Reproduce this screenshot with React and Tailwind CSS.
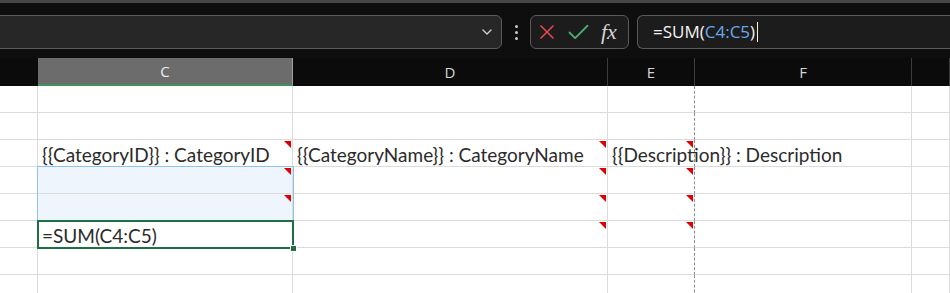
import React from 'react';
import { ChevronDown, X, Check } from 'lucide-react';

const cols = ['B', 'C', 'D', 'E', 'F', 'G'];

// red comment markers per row index (0-based) and column
const markers = {
    2: ['C', 'D', 'E'],
    3: ['C', 'D', 'E'],
    4: ['C', 'D', 'E'],
    5: ['D', 'E'],
};

const Marker = () => (
    <div className="absolute top-[1px] right-[1px] w-0 h-0 border-l-[7px] border-l-transparent border-t-[7px] border-t-[#e00000] z-20" />
);

const cellText = {
    '2C': '{{CategoryID}} : CategoryID',
    '2D': '{{CategoryName}} : CategoryName',
    '2E': '{{Description}} : Description',
    '5C': '=SUM(C4:C5)',
};

const App = () => {
    const rows = [0, 1, 2, 3, 4, 5, 6, 7];

    return (
        <div className="w-[950px] h-[293px] overflow-hidden bg-white">
            <div className="h-[3px] bg-[#474747]" />

            {/* formula bar */}
            <div className="h-[55px] bg-[#0e0e0e] pt-[12px] flex items-start font-['Open_Sans']">
                <div className="ml-[-12px] w-[514px] h-[34px] rounded-md border border-[#5a5a5a] bg-[#272727] flex items-center justify-end pr-[6px] text-[#cfcfcf]">
                    <ChevronDown size={16} strokeWidth={2} />
                </div>
                <div className="w-[28px] h-[34px] flex flex-col items-center justify-center gap-[3px]">
                    <span className="w-[3px] h-[3px] rounded-full bg-[#c8c8c8]" />
                    <span className="w-[3px] h-[3px] rounded-full bg-[#c8c8c8]" />
                    <span className="w-[3px] h-[3px] rounded-full bg-[#c8c8c8]" />
                </div>
                <div className="w-[99px] h-[34px] rounded-md border border-[#5a5a5a] bg-[#1c1c1c] flex items-center pl-[4px]">
                    <X size={24} strokeWidth={1.6} className="text-[#e5484f]" />
                    <Check size={27} strokeWidth={1.6} className="text-[#4cae6c] ml-[6px]" />
                    <span className="ml-[9px] font-['Liberation_Serif'] italic text-[22px] leading-none text-[#d4d4d4]">fx</span>
                </div>
                <div className="ml-[8px] flex-1 h-[34px] rounded-l-md border border-r-0 border-[#5a5a5a] bg-[#1c1c1c] flex items-center pl-[15px] text-[17px] text-[#f2f2f2]">
                    <span>=SUM(</span>
                    <span className="text-[#6aa9e6]">C4:C5</span>
                    <span>)</span>
                    <span className="ml-[2px] w-[1px] h-[20px] bg-[#f2f2f2]" />
                </div>
            </div>

            {/* column headers */}
            <div className="grid grid-cols-[38px_255px_315px_87px_217px_38px] h-[28px] bg-[#0b0b0b] font-['Open_Sans'] text-[15px] text-[#d6d6d6]">
                {cols.map((c) => (
                    <div
                        key={c}
                        className={`flex items-center justify-center border-r ${
                            c === 'C'
                                ? 'bg-[#6c6c6c] border-r-[#a0a0a0] border-b-2 border-b-[#3f8f5f] text-[#ececec]'
                                : c === 'B'
                                ? 'border-r-transparent'
                                : 'border-r-[#3c3c3c]'
                        }`}
                    >
                        {c === 'B' || c === 'G' ? '' : c}
                    </div>
                ))}
            </div>

            {/* sheet body */}
            <div className="relative grid grid-cols-[38px_255px_315px_87px_217px_38px] font-['Lato'] text-[19px] text-[#2b2b2b]">
                {rows.map((r) =>
                    cols.map((c) => {
                        const key = `${r}${c}`;
                        const selected = c === 'C' && (r === 3 || r === 4);
                        return (
                            <div
                                key={key}
                                className={`relative h-[27px] border-b border-b-[#dcdcdc] border-r ${
                                    c === 'E'
                                        ? '[border-right-style:dashed] border-r-[#8c8c8c] z-10'
                                        : 'border-r-[#dcdcdc]'
                                } ${selected ? 'bg-[#eef5fc]' : ''}`}
                            >
                                {cellText[key] && (
                                    <div className="absolute left-[4px] top-[3px] whitespace-nowrap leading-[24px]">
                                        {cellText[key]}
                                    </div>
                                )}
                                {markers[r] && markers[r].includes(c) && <Marker />}
                            </div>
                        );
                    })
                )}

                {/* selection range C4:C5 */}
                <div className="absolute left-[37px] top-[80px] w-[257px] h-[55px] border border-[#8cc4f0] pointer-events-none z-20" />

                {/* active cell C6 */}
                <div className="absolute left-[37px] top-[134px] w-[257px] h-[29px] border-2 border-[#1f6f44] z-30">
                    <div className="absolute right-[-5px] bottom-[-5px] w-[7px] h-[7px] bg-[#1f6f44] border border-white" />
                </div>
            </div>
        </div>
    );
};

export default App;
